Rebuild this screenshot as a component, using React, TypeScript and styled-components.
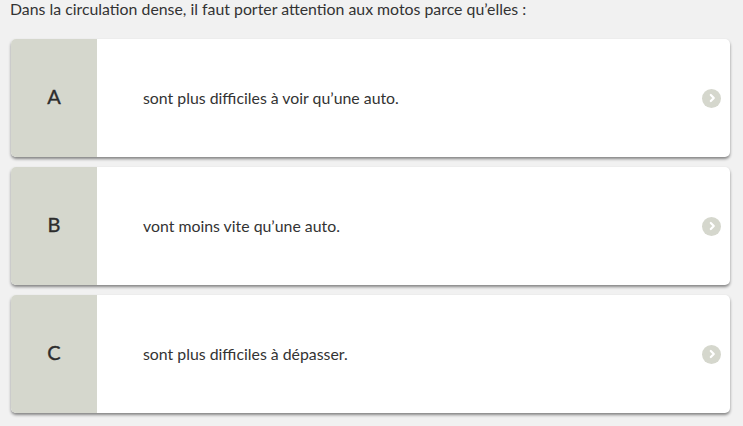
import React from 'react';
import styled, { createGlobalStyle } from 'styled-components';

interface Answer {
  letter: string;
  text: string;
}

const GlobalStyle = createGlobalStyle`
  html, body {
    margin: 0;
    padding: 0;
    background: #f1f1f1;
    font-family: Lato, "Open Sans", sans-serif;
    font-variant-ligatures: no-discretionary-ligatures;
  }
`;

const Page = styled.div`
  width: 743px;
  height: 426px;
  box-sizing: border-box;
  padding: 0 13px 0 11px;
  background: #f1f1f1;
  overflow: hidden;
`;

const Question = styled.div`
  font-size: 15.85px;
  line-height: 18px;
  color: #333;
  margin-left: -1px;
  height: 39px;
`;

const List = styled.div`
  display: flex;
  flex-direction: column;
  gap: 10px;
`;

const Card = styled.div`
  display: flex;
  align-items: stretch;
  height: 118px;
  background: #fff;
  border-radius: 5px;
  overflow: hidden;
  box-shadow: 0 2px 3px rgba(0, 0, 0, 0.45);
  cursor: pointer;
`;

const Letter = styled.div`
  width: 86px;
  flex-shrink: 0;
  background: #d5d7cd;
  display: flex;
  align-items: center;
  justify-content: center;
  padding-bottom: 4px;
  box-sizing: border-box;
  font-size: 20px;
  font-weight: 400;
  -webkit-text-stroke: 0.35px #2d2d2d;
  color: #2d2d2d;
`;

const Text = styled.div`
  flex: 1;
  display: flex;
  align-items: center;
  padding-left: 46px;
  padding-bottom: 2px;
  font-size: 15.85px;
  color: #333;
`;

const Arrow = styled.div`
  width: 19px;
  height: 19px;
  border-radius: 50%;
  background: #d5d7cd;
  align-self: center;
  margin-right: 9px;
  display: flex;
  align-items: center;
  justify-content: center;
`;

const answers: Answer[] = [
  { letter: 'A', text: 'sont plus difficiles à voir qu’une auto.' },
  { letter: 'B', text: 'vont moins vite qu’une auto.' },
  { letter: 'C', text: 'sont plus difficiles à dépasser.' },
];

const App: React.FC = () => {
  return (
    <Page>
      <GlobalStyle />
      <Question>Dans la circulation dense, il faut porter attention aux motos parce qu’elles :</Question>
      <List>
        {answers.map((a) => (
          <Card key={a.letter}>
            <Letter>{a.letter}</Letter>
            <Text>{a.text}</Text>
            <Arrow>
              <svg width="10" height="10" viewBox="0 0 10 10">
                <path d="M3.8 2 L6.8 5 L3.8 8" fill="none" stroke="#fff" strokeWidth="2.2" strokeLinecap="round" strokeLinejoin="round" />
              </svg>
            </Arrow>
          </Card>
        ))}
      </List>
    </Page>
  );
};

export default App;
